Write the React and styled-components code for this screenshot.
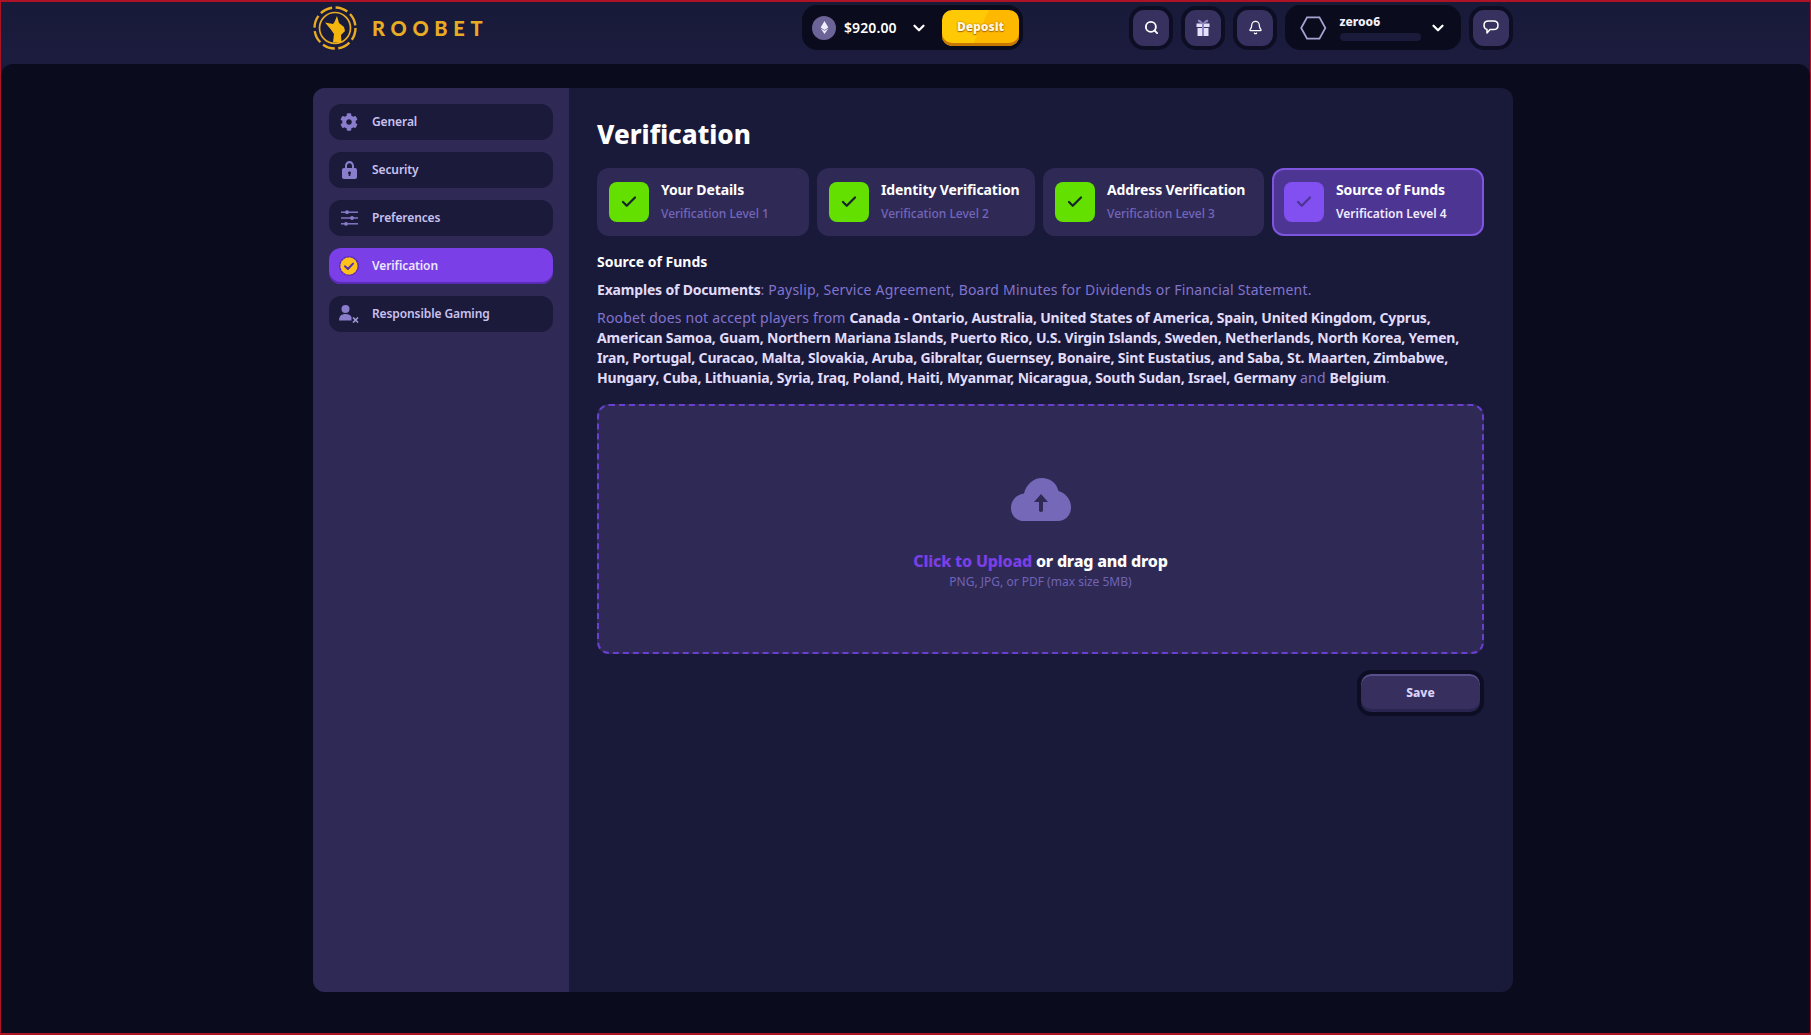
import React from "react";
import styled, { createGlobalStyle } from "styled-components";
import { FaCog, FaEthereum } from "react-icons/fa";
import { Search, Bell, ChevronDown, Check } from "lucide-react";

const GlobalStyle = createGlobalStyle`
    html, body {
        margin: 0;
        padding: 0;
        background: #0a0b1d;
        font-family: "Noto Sans", "Lato", sans-serif;
    }
    * { box-sizing: border-box; }
`;

const Page = styled.div`
    height: 100vh;
    display: flex;
    flex-direction: column;
    background: #1a1b3b;
    border: 1px solid #ad1225;
    border-width: 2px 1px;
    overflow: hidden;
`;

const Header = styled.header`
    height: 62px;
    flex: none;
    display: flex;
    justify-content: center;
    padding-left: 15px;
    background: linear-gradient(#181a38, #1c1c3f);
`;

const HeaderInner = styled.div`
    width: 1200px;
    display: flex;
    align-items: flex-start;
    padding-top: 3px;
`;

const Logo = styled.div`
    width: 489px;
    height: 44px;
    margin-top: 1px;
    display: flex;
    align-items: center;
    gap: 15px;
`;

const LogoText = styled.span`
    font-family: "Lato", sans-serif;
    font-size: 20px;
    font-weight: 900;
    letter-spacing: 5.7px;
    color: #e8ab23;
`;

const Pill = styled.div`
    height: 45px;
    display: flex;
    align-items: center;
    background: #0a0b1d;
    border-radius: 15px;
`;

const Wallet = styled(Pill)`
    width: 221px;
    padding: 0 4px 0 10px;
`;

const Coin = styled.span`
    width: 24px;
    height: 24px;
    border-radius: 50%;
    background: #6c6396;
    color: #f1eefc;
    display: flex;
    align-items: center;
    justify-content: center;
    font-size: 13px;
`;

const Amount = styled.span`
    margin-left: 8px;
    font-size: 14px;
    font-weight: 600;
    letter-spacing: 0.1px;
    color: #fff;
`;

const Chevron = styled(ChevronDown)`
    color: #fff;
    flex: none;
`;

const WalletChevron = styled(Chevron)`
    margin-left: 13px;
`;

const DepositButton = styled.button`
    width: 77px;
    height: 36px;
    margin-left: auto;
    padding: 0 0 3px;
    border: 0;
    border-radius: 10px;
    font-family: inherit;
    font-size: 12px;
    font-weight: 900;
    color: #fff6dc;
    text-shadow: 0 0 2px #a86a00, 0 1px 1px #a86a00;
    background: linear-gradient(115deg, #ffc905 0 50%, #ffb800 50% 100%);
    box-shadow: inset 0 -3px 0 #c87800;
`;

const RightGroup = styled.div`
    margin-left: auto;
    display: flex;
    align-items: center;
    gap: 8px;
`;

const IconButton = styled.button`
    width: 44px;
    height: 44px;
    padding: 0;
    border: 4px solid #0d0e24;
    border-radius: 15px;
    background: #37315f;
    color: #fff;
    display: flex;
    align-items: center;
    justify-content: center;
`;

const UserPill = styled(Pill)`
    width: 176px;
    padding: 0 14px 0 15px;
`;

const UserInfo = styled.div`
    width: 83px;
    margin-left: 13px;
    margin-right: 8px;
    display: flex;
    flex-direction: column;
    gap: 4px;
`;

const UserName = styled.span`
    font-size: 12px;
    line-height: 14px;
    font-weight: 800;
    color: #f2effc;
`;

const XpBar = styled.span`
    display: block;
    height: 8px;
    border-radius: 4px;
    background: #1a1b3b;
`;

const Main = styled.main`
    flex: 1;
    min-height: 0;
    display: flex;
    justify-content: center;
    padding: 24px 0 41px 15px;
    background: #0a0b1d;
    border-radius: 12px 12px 0 0;
`;

const Card = styled.div`
    width: 1200px;
    display: flex;
    border-radius: 12px;
    overflow: hidden;
    background: #191a3a;
`;

const Sidebar = styled.nav`
    width: 256px;
    flex: none;
    padding: 16px;
    display: flex;
    flex-direction: column;
    gap: 12px;
    background: #2f2a55;
`;

const NavItem = styled.a`
    height: 36px;
    padding-bottom: 1px;
    display: flex;
    align-items: center;
    border-radius: 12px;
    font-size: 12px;
    font-weight: 600;
    letter-spacing: -0.1px;
    color: ${p => (p.$active ? "#ece6ff" : "#c9c2f0")};
    background: ${p => (p.$active ? "#7a3fe6" : "#1b1a3b")};
    box-shadow: ${p => (p.$active ? "inset 0 -2px 0 #5a2bb5" : "none")};
`;

const NavIcon = styled.span`
    width: 24px;
    height: 24px;
    margin: 0 11px 0 8px;
    display: flex;
    align-items: center;
    justify-content: center;
    color: #8a7dcc;
    font-size: 18px;
`;

const Content = styled.section`
    flex: 1;
    padding: 28px 29px 0 28px;
    display: flex;
    flex-direction: column;
`;

const Title = styled.h1`
    margin: 0;
    font-size: 26px;
    line-height: 36px;
    font-weight: 800;
    color: #fff;
`;

const Steps = styled.div`
    margin-top: 16px;
    display: grid;
    grid-template-columns: 212fr 218fr 221fr 212fr;
    gap: 8px;
`;

const Step = styled.div`
    height: 68px;
    padding: 0 12px;
    display: flex;
    align-items: center;
    gap: 12px;
    border-radius: 12px;
    background: ${p => (p.$current ? "#4d3594" : "#2f2a55")};
    border: ${p => (p.$current ? "2px solid #7f55e0" : "none")};
    padding-left: ${p => (p.$current ? "10px" : "12px")};
`;

const StepBox = styled.span`
    width: 40px;
    height: 40px;
    flex: none;
    border-radius: 8px;
    display: flex;
    align-items: center;
    justify-content: center;
    background: ${p => (p.$current ? "#8250f0" : "#63e000")};
    color: ${p => (p.$current ? "#4d3594" : "#16262a")};
`;

const StepText = styled.div`
    display: flex;
    flex-direction: column;
    gap: 7px;
    padding-bottom: 2px;
`;

const StepTitle = styled.span`
    font-size: 14px;
    line-height: 18px;
    font-weight: 700;
    letter-spacing: -0.1px;
    color: #fff;
`;

const StepSub = styled.span`
    font-size: 12px;
    line-height: 16px;
    font-weight: ${p => (p.$current ? 600 : 500)};
    color: ${p => (p.$current ? "#f0ebff" : "#7366bd")};
`;

const Heading = styled.h2`
    margin: 16px 0 0;
    font-size: 14px;
    line-height: 20px;
    font-weight: 700;
    color: #fff;
`;

const Text = styled.p`
    margin: 8px 0 0;
    font-size: 14px;
    line-height: 20px;
    font-weight: 400;
    letter-spacing: 0.2px;
    color: #8274cd;
    white-space: nowrap;
    b {
        font-weight: 700;
        letter-spacing: -0.18px;
        color: #e2dcfb;
    }
`;

const DropZone = styled.div`
    height: 250px;
    margin-top: 16px;
    padding-top: 72px;
    display: flex;
    flex-direction: column;
    align-items: center;
    background: #2f2a55;
    border: 2px dashed #6a3fd0;
    border-radius: 12px;
`;

const DropTitle = styled.div`
    margin-top: 30px;
    font-size: 16px;
    line-height: 20px;
    font-weight: 800;
    letter-spacing: -0.2px;
    color: #fff;
    span {
        color: #7a3fe6;
    }
`;

const DropHint = styled.div`
    margin-top: 3px;
    font-size: 12px;
    line-height: 16px;
    font-weight: 400;
    color: #6f63b8;
`;

const Actions = styled.div`
    margin-top: 16px;
    display: flex;
    justify-content: flex-end;
`;

const SaveButton = styled.button`
    width: 127px;
    height: 46px;
    padding: 0 0 2px;
    border: 4px solid #0d0e24;
    border-radius: 14px;
    font-family: inherit;
    font-size: 12px;
    font-weight: 800;
    color: #d9d2fa;
    background: #37305f;
    box-shadow: inset 0 2px 0 #57508a, inset 0 -3px 0 #2a2550;
`;

const LogoMark = () => (
    <svg width="44" height="44" viewBox="0 0 44 44" fill="none">
        <circle cx="22" cy="22" r="20.5" stroke="#e8ab23" strokeWidth="2.4" strokeDasharray="12.5 3.6" />
        <circle cx="22" cy="22" r="15.5" stroke="#e8ab23" strokeWidth="1.7" />
        <path
            d="M24 10 L26 17 L31 21 L32 25 L28 29 L28.5 36.5 L20 36.5 L21 28 L17.5 23 L12 16.5 L20 18 L21.5 16 Z"
            fill="#f5b50f"
        />
    </svg>
);

const LockIcon = () => (
    <svg width="15" height="18" viewBox="0 0 15 18">
        <path
            fillRule="evenodd"
            d="M3 7 V5 C3 2 5 0 7.5 0 C10 0 12 2 12 5 V7 H13 C14.2 7 15 7.8 15 9 V16 C15 17.2 14.2 18 13 18 H2 C0.8 18 0 17.2 0 16 V9 C0 7.8 0.8 7 2 7 Z M5 7 H10 V5 C10 3.4 9 2.2 7.5 2.2 C6 2.2 5 3.4 5 5 Z M7.5 10.5 C6.6 10.5 6 11.1 6 12 C6 12.6 6.3 13 6.7 13.2 V15 H8.3 V13.2 C8.7 13 9 12.6 9 12 C9 11.1 8.4 10.5 7.5 10.5 Z"
            fill="#8a7dcc"
        />
    </svg>
);

const SlidersIcon = () => (
    <svg width="17" height="16" viewBox="0 0 17 16" fill="#8a7dcc">
        <rect x="0" y="1.5" width="17" height="1.4" />
        <rect x="0" y="7.3" width="17" height="1.4" />
        <rect x="0" y="13.1" width="17" height="1.4" />
        <circle cx="6" cy="2.2" r="1.9" />
        <circle cx="11" cy="8" r="1.9" />
        <circle cx="5" cy="13.8" r="1.9" />
    </svg>
);

const BadgeIcon = () => (
    <svg width="20" height="20" viewBox="0 0 20 20">
        <circle cx="10" cy="10" r="9.2" fill="#ffc21a" stroke="#5a2bb5" strokeWidth="1.4" strokeDasharray="3 0.4" />
        <path d="M6 10.2 L8.9 13 L14 7.6" fill="none" stroke="#5a2bb5" strokeWidth="2" strokeLinecap="round" strokeLinejoin="round" />
    </svg>
);

const PersonXIcon = () => (
    <svg width="20" height="18" viewBox="0 0 20 18" fill="#8a7dcc">
        <circle cx="6.5" cy="4" r="4" />
        <path d="M0 15.5 C0 11 2.5 9 6.5 9 C9.5 9 11.5 10 12.5 12 V15.5 Z" />
        <path d="M14 12.5 L19 17.5 M19 12.5 L14 17.5" stroke="#a79cdc" strokeWidth="1.6" />
    </svg>
);

const CloudIcon = () => (
    <svg width="60" height="43" viewBox="0 0 60 43">
        <path
            d="M13 43 C5.5 43 0 37.5 0 30 C0 22.5 5.5 16.5 13 15.5 C15.5 6 22.5 0 31 0 C39 0 45.5 5 47.5 13 C54.5 15 60 21.5 60 29.5 C60 37 54.5 43 47 43 Z"
            fill="#7668b8"
        />
        <path d="M30 16 L37 24 L32 24 L32 33 Q30 35 28 33 L28 24 L23 24 Z" fill="#2f2a55" />
    </svg>
);

const GiftIcon = () => (
    <svg width="14" height="17" viewBox="0 0 14 17">
        <path d="M7 4 C4 0 1 0 2 2.5 C2.6 4 5 4 7 4 C9 4 11.4 4 12 2.5 C13 0 10 0 7 4 Z" fill="#8f86c8" />
        <rect x="0.5" y="4.5" width="13" height="3.5" fill="#e4dffa" />
        <rect x="1.5" y="9" width="11" height="8" fill="#e4dffa" />
        <rect x="6" y="4.5" width="2" height="12.5" fill="#8f86c8" />
    </svg>
);

const ChatIcon = () => (
    <svg width="16" height="15" viewBox="0 0 16 15" fill="none">
        <path
            d="M5.5 1 H10.5 C13.2 1 15 2.8 15 5.2 C15 7.8 13.2 9.6 10.5 9.6 H7 L4 13 V9.4 C2.2 9 1 7.4 1 5.2 C1 2.8 2.8 1 5.5 1 Z"
            stroke="#fff"
            strokeWidth="1.5"
            strokeLinejoin="round"
        />
    </svg>
);

const Hexagon = () => (
    <svg width="27" height="24" viewBox="0 0 27 24" fill="none">
        <path d="M7.2 1.2 L19.8 1.2 L25.8 12 L19.8 22.8 L7.2 22.8 L1.2 12 Z" stroke="#a9a3d4" strokeWidth="1.8" />
    </svg>
);

const navItems = [
    { label: "General", icon: <FaCog /> },
    { label: "Security", icon: <LockIcon /> },
    { label: "Preferences", icon: <SlidersIcon /> },
    { label: "Verification", icon: <BadgeIcon />, active: true },
    { label: "Responsible Gaming", icon: <PersonXIcon /> },
];

const steps = [
    { title: "Your Details", sub: "Verification Level 1" },
    { title: "Identity Verification", sub: "Verification Level 2" },
    { title: "Address Verification", sub: "Verification Level 3" },
    { title: "Source of Funds", sub: "Verification Level 4", current: true },
];

const App = () => {
    return (
        <>
            <GlobalStyle />
            <Page>
                <Header>
                    <HeaderInner>
                        <Logo>
                            <LogoMark />
                            <LogoText>ROOBET</LogoText>
                        </Logo>
                        <Wallet>
                            <Coin><FaEthereum /></Coin>
                            <Amount>$920.00</Amount>
                            <WalletChevron size={18} strokeWidth={3} />
                            <DepositButton>Deposit</DepositButton>
                        </Wallet>
                        <RightGroup>
                            <IconButton><Search size={15} strokeWidth={3} /></IconButton>
                            <IconButton><GiftIcon /></IconButton>
                            <IconButton><Bell size={15} strokeWidth={2} /></IconButton>
                            <UserPill>
                                <Hexagon />
                                <UserInfo>
                                    <UserName>zeroo6</UserName>
                                    <XpBar />
                                </UserInfo>
                                <Chevron size={18} strokeWidth={3} />
                            </UserPill>
                            <IconButton><ChatIcon /></IconButton>
                        </RightGroup>
                    </HeaderInner>
                </Header>
                <Main>
                    <Card>
                        <Sidebar>
                            {navItems.map(item => (
                                <NavItem key={item.label} $active={item.active}>
                                    <NavIcon>{item.icon}</NavIcon>
                                    {item.label}
                                </NavItem>
                            ))}
                        </Sidebar>
                        <Content>
                            <Title>Verification</Title>
                            <Steps>
                                {steps.map(step => (
                                    <Step key={step.title} $current={step.current}>
                                        <StepBox $current={step.current}>
                                            <Check size={18} strokeWidth={3} />
                                        </StepBox>
                                        <StepText>
                                            <StepTitle>{step.title}</StepTitle>
                                            <StepSub $current={step.current}>{step.sub}</StepSub>
                                        </StepText>
                                    </Step>
                                ))}
                            </Steps>
                            <Heading>Source of Funds</Heading>
                            <Text>
                                <b>Examples of Documents</b>: Payslip, Service Agreement, Board Minutes for Dividends or Financial Statement.
                            </Text>
                            <Text>
                                Roobet does not accept players from <b>Canada - Ontario, Australia, United States of America, Spain, United Kingdom, Cyprus,<br />
                                American Samoa, Guam, Northern Mariana Islands, Puerto Rico, U.S. Virgin Islands, Sweden, Netherlands, North Korea, Yemen,<br />
                                Iran, Portugal, Curacao, Malta, Slovakia, Aruba, Gibraltar, Guernsey, Bonaire, Sint Eustatius, and Saba, St. Maarten, Zimbabwe,<br />
                                Hungary, Cuba, Lithuania, Syria, Iraq, Poland, Haiti, Myanmar, Nicaragua, South Sudan, Israel, Germany</b> and <b>Belgium</b>.
                            </Text>
                            <DropZone>
                                <CloudIcon />
                                <DropTitle><span>Click to Upload</span> or drag and drop</DropTitle>
                                <DropHint>PNG, JPG, or PDF (max size 5MB)</DropHint>
                            </DropZone>
                            <Actions>
                                <SaveButton>Save</SaveButton>
                            </Actions>
                        </Content>
                    </Card>
                </Main>
            </Page>
        </>
    );
};

export default App;
